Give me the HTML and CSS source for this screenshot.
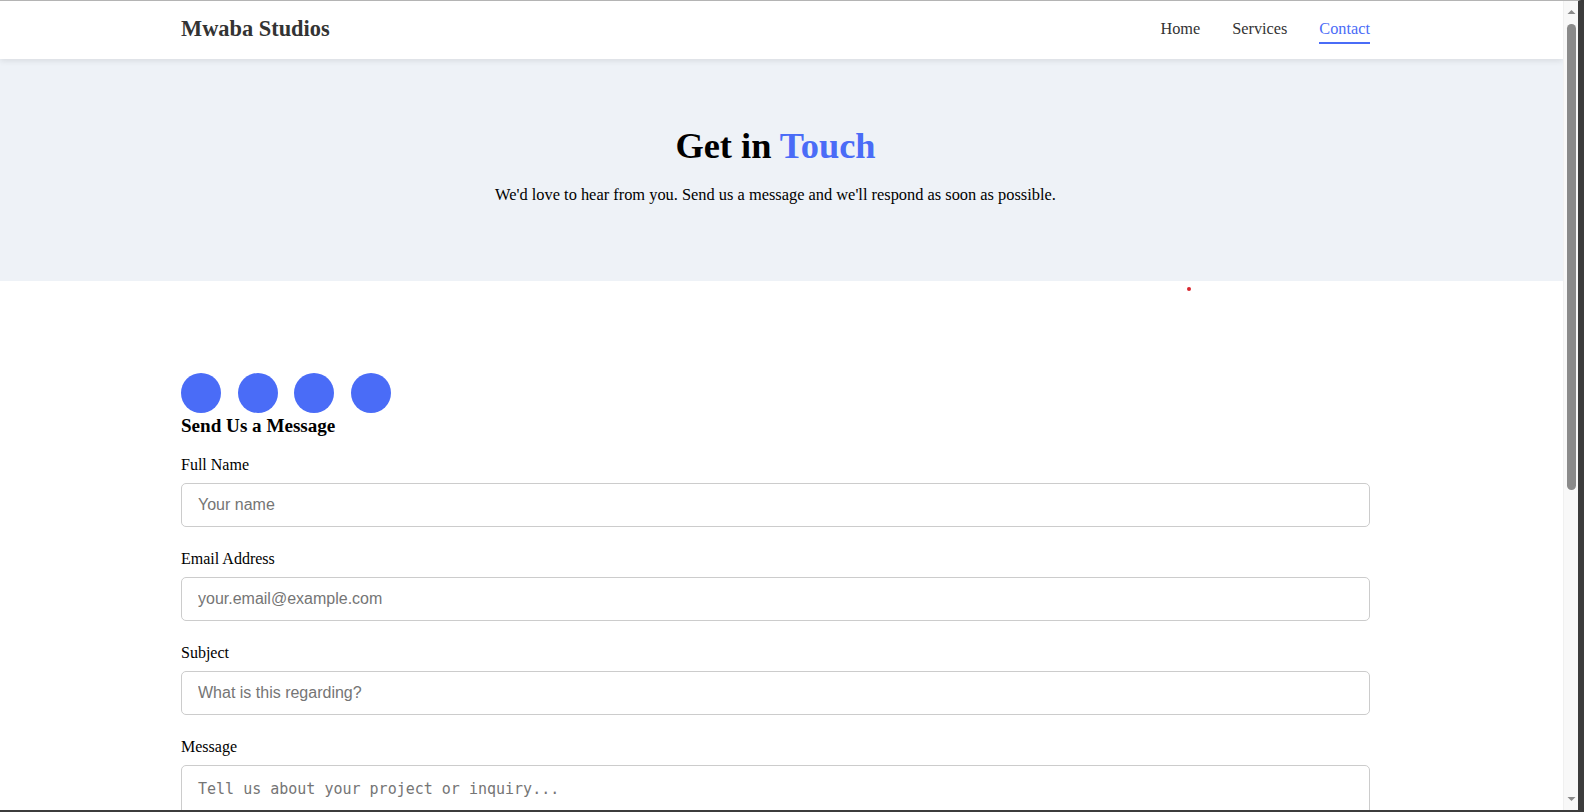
FILE: index.html
```html
<!DOCTYPE html>
<html lang="en">
<head>
<meta charset="utf-8">
<title>Contact - Mwaba Studios</title>
<link rel="stylesheet" href="styles.css">
</head>
<body>
<div class="window">
  <div class="viewport">
    <header class="site-header">
      <div class="container header-inner">
        <a class="logo" href="#">Mwaba Studios</a>
        <nav class="nav">
          <a href="#">Home</a>
          <a href="#">Services</a>
          <a href="#" class="active">Contact</a>
        </nav>
      </div>
    </header>

    <section class="hero">
      <div class="container">
        <h1>Get in <span class="accent">Touch</span></h1>
        <p>We'd love to hear from you. Send us a message and we'll respond as soon as possible.</p>
      </div>
    </section>

    <section class="contact">
      <span class="dot"></span>
      <div class="container">
        <div class="socials">
          <span class="circle"></span>
          <span class="circle"></span>
          <span class="circle"></span>
          <span class="circle"></span>
        </div>
        <h3 class="form-title">Send Us a Message</h3>
        <form class="form">
          <div class="group">
            <label for="name">Full Name</label>
            <input id="name" type="text" placeholder="Your name">
          </div>
          <div class="group">
            <label for="email">Email Address</label>
            <input id="email" type="email" placeholder="your.email@example.com">
          </div>
          <div class="group">
            <label for="subject">Subject</label>
            <input id="subject" type="text" placeholder="What is this regarding?">
          </div>
          <div class="group">
            <label for="message">Message</label>
            <textarea id="message" placeholder="Tell us about your project or inquiry..."></textarea>
          </div>
        </form>
      </div>
    </section>
  </div>

  <div class="scrollbar" aria-hidden="true">
    <div class="sb-arrow">
      <svg width="15" height="20" viewBox="0 0 15 20"><path d="M3.5 13 L7.5 9 L11.5 13 Z" fill="#8a8a8a"/></svg>
    </div>
    <div class="sb-thumb"></div>
    <div class="sb-space"></div>
    <div class="sb-arrow">
      <svg width="15" height="20" viewBox="0 0 15 20"><path d="M3.5 7 L7.5 11 L11.5 7 Z" fill="#8a8a8a"/></svg>
    </div>
  </div>
</div>
</body>
</html>
```

FILE: styles.css
```css
* { box-sizing: border-box; }

html, body {
  margin: 0;
  padding: 0;
  height: 100%;
  overflow: hidden;
  background: #3a3a3a;
}

body {
  font-family: "Liberation Serif", "Times New Roman", serif;
  font-size: 16px;
  color: #000;
}

.window {
  height: 812px;
  display: flex;
  background: #fff;
  border-top: 1px solid #b4b4b4;
  border-right: 6px solid #3c3c3c;
  border-bottom: 2px solid #3c3c3c;
  border-radius: 0 6px 6px 0;
  overflow: hidden;
}

.viewport {
  flex: 1;
  overflow: hidden;
}

/* Scrollbar (drawn) */
.scrollbar {
  width: 15px;
  flex: none;
  background: #f8f8f8;
  border-left: 1px solid #f0f0f0;
  display: flex;
  flex-direction: column;
  align-items: center;
}
.sb-arrow {
  height: 20px;
  flex: none;
  display: flex;
}
.sb-thumb {
  width: 9px;
  height: 466px;
  margin-top: 3px;
  border-radius: 5px;
  background: #8a8a8a;
  flex: none;
}
.sb-space {
  flex: 1;
}

.container {
  width: 1189px;
  margin-left: 181px;
}

/* Header */
.site-header {
  background: #fff;
  height: 58px;
  box-shadow: 0 2px 6px rgba(0, 0, 0, 0.09);
  position: relative;
  z-index: 2;
}
.header-inner {
  height: 100%;
  display: flex;
  justify-content: space-between;
  align-items: center;
}
.logo {
  font-size: 22.4px;
  font-weight: bold;
  color: #333;
  text-decoration: none;
  margin-top: -2px;
}
.nav {
  display: flex;
  gap: 32px;
  margin-top: 2px;
}
.nav a {
  color: #333;
  text-decoration: none;
  font-size: 16.3px;
  padding-bottom: 3px;
  border-bottom: 2px solid transparent;
}
.nav a.active {
  color: #4a6cf7;
  border-bottom-color: #4a6cf7;
}

/* Hero */
.hero {
  background: #eef2f7;
  padding: 66px 0 60px;
  text-align: center;
}
.hero .container {
  display: flex;
  flex-direction: column;
  align-items: center;
}
.hero h1 {
  font-size: 36.4px;
  font-weight: bold;
  margin: 0 0 18px;
  color: #000;
}
.accent {
  color: #4a6cf7;
}
.hero p {
  margin: 0 0 16px;
  font-size: 16.4px;
}

/* Contact */
.contact {
  position: relative;
  padding: 92px 0 96px;
}
.dot {
  position: absolute;
  top: 6px;
  left: 1187px;
  width: 4px;
  height: 4px;
  border-radius: 50%;
  background: #d8262f;
}
.socials {
  display: flex;
  gap: 16.7px;
}
.circle {
  width: 40px;
  height: 40px;
  border-radius: 50%;
  background: #4a6cf7;
}
.form-title {
  font-size: 19.1px;
  font-weight: bold;
  margin: 2px 0 19px;
}
.group {
  display: flex;
  flex-direction: column;
  margin-bottom: 23px;
}
.group label {
  font-size: 16px;
  margin-bottom: 9px;
}
.group input,
.group textarea {
  width: 100%;
  border: 1px solid #cccccc;
  border-radius: 5px;
  padding: 12px 16px;
  font-family: "Liberation Sans", Arial, sans-serif;
  font-size: 16px;
  color: #222;
  background: #fff;
  outline: none;
}
.group input {
  height: 44px;
}
.group textarea {
  font-family: "DejaVu Sans Mono", "Liberation Mono", monospace;
  font-size: 15px;
  padding-top: 14px;
  height: 150px;
  resize: vertical;
}
.group input::placeholder,
.group textarea::placeholder {
  color: #757575;
}
```
